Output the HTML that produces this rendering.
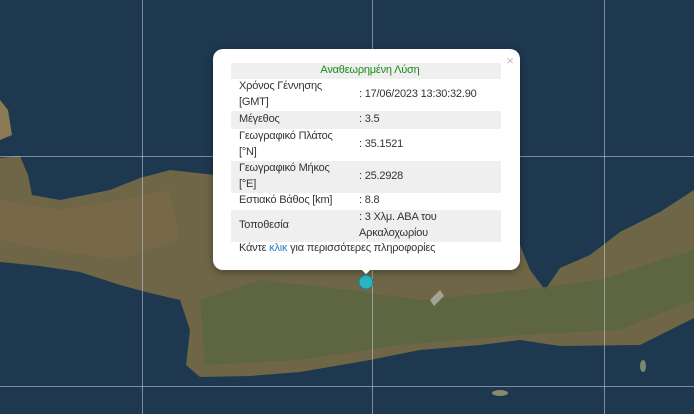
<!DOCTYPE html>
<html><head><meta charset="utf-8"><style>
*{margin:0;padding:0;box-sizing:border-box}
body{width:694px;height:414px;overflow:hidden;position:relative;background:#1c334a;font-family:"Liberation Sans",Arial,sans-serif}
svg.map{position:absolute;left:0;top:0}
.pop{position:absolute;left:213px;top:49px;width:307px;height:221px;background:#fff;border-radius:10px;box-shadow:0 2px 8px rgba(0,0,0,.35)}
.tip{position:absolute;left:359px;top:268px;width:14px;height:7px;overflow:hidden}
.tip:after{content:"";position:absolute;left:2px;top:-6px;width:10px;height:10px;background:#fff;transform:rotate(45deg)}
.x{position:absolute;right:6px;top:4px;color:#bbb;font-size:13px}
table{position:absolute;left:18px;top:14px;width:270px;border-collapse:collapse;font-size:11px;color:#333;letter-spacing:-0.2px}
td{padding:0 0 0 8px;vertical-align:middle;line-height:15.5px}
td+td{padding-left:0}
.g{background:#efefef}
.h{text-align:center;color:#1a8a1a;height:15px}
.foot{position:absolute;left:26px;top:193px;font-size:11px;color:#333;letter-spacing:-0.2px}
.foot span{color:#2a81c6}
</style></head><body>
<svg class="map" width="694" height="414" viewBox="0 0 694 414">
<rect width="694" height="414" fill="#1e3850"/>
<path d="M0 100 L8 110 L12 135 L0 140 Z" fill="#8a7a55"/>
<path d="M0 158 L20 156 L28 175 L32 195 L60 200 L110 190 L140 178 L170 170 L215 175 L240 190 L520 245 L530 270 L545 290 L560 268 L590 255 L620 232 L660 212 L694 190 L694 318 L640 345 L560 346 L520 340 L480 345 L420 350 L370 360 L300 372 L250 376 L200 377 L186 365 L190 330 L180 300 L150 293 L120 285 L80 272 L40 266 L0 262 Z" fill="#6e6646"/>
<path d="M200 300 L260 280 L350 290 L420 300 L520 290 L600 280 L660 260 L694 250 L694 300 L620 330 L520 335 L400 345 L300 360 L205 365 Z" fill="#5a6640" opacity=".8"/>
<path d="M0 200 L60 210 L120 200 L170 190 L180 240 L120 260 L50 250 L0 240 Z" fill="#7d6b48" opacity=".6"/>
<path d="M430 300 L440 290 L444 296 L434 306 Z" fill="#ccc" opacity=".6"/>
<ellipse cx="500" cy="393" rx="8" ry="3" fill="#8a8a6a"/>
<ellipse cx="643" cy="366" rx="3" ry="6" fill="#7a8a6a"/>
<g stroke="#c8d4de" stroke-opacity=".55" stroke-width="1">
<line x1="142.5" y1="0" x2="142.5" y2="414"/><line x1="372.5" y1="0" x2="372.5" y2="414"/><line x1="604.5" y1="0" x2="604.5" y2="414"/>
<line x1="0" y1="156.5" x2="694" y2="156.5"/><line x1="0" y1="386.5" x2="694" y2="386.5"/>
</g>
<circle cx="366" cy="282" r="7" fill="#2bb3c0" stroke="#1b7f8a" stroke-width="1"/>
</svg>
<div class="pop">
<div class="x">×</div>
<table>
<tr class="g"><td colspan="2" class="h">Αναθεωρημένη Λύση</td></tr>
<tr style="height:32px"><td style="width:128px">Χρόνος Γέννησης<br>[GMT]</td><td>: 17/06/2023 13:30:32.90</td></tr>
<tr class="g" style="height:18px"><td>Μέγεθος</td><td>: 3.5</td></tr>
<tr style="height:32px"><td>Γεωγραφικό Πλάτος<br>[°N]</td><td>: 35.1521</td></tr>
<tr class="g" style="height:32px"><td>Γεωγραφικό Μήκος<br>[°E]</td><td>: 25.2928</td></tr>
<tr style="height:17px"><td>Εστιακό Βάθος [km]</td><td>: 8.8</td></tr>
<tr class="g" style="height:32px"><td>Τοποθεσία</td><td>: 3 Χλμ. ΑΒΑ του<br>Αρκαλοχωρίου</td></tr>
</table>
<div class="foot">Κάντε <span>κλικ</span> για περισσότερες πληροφορίες</div>
</div>
<div class="tip"></div>
</body></html>
